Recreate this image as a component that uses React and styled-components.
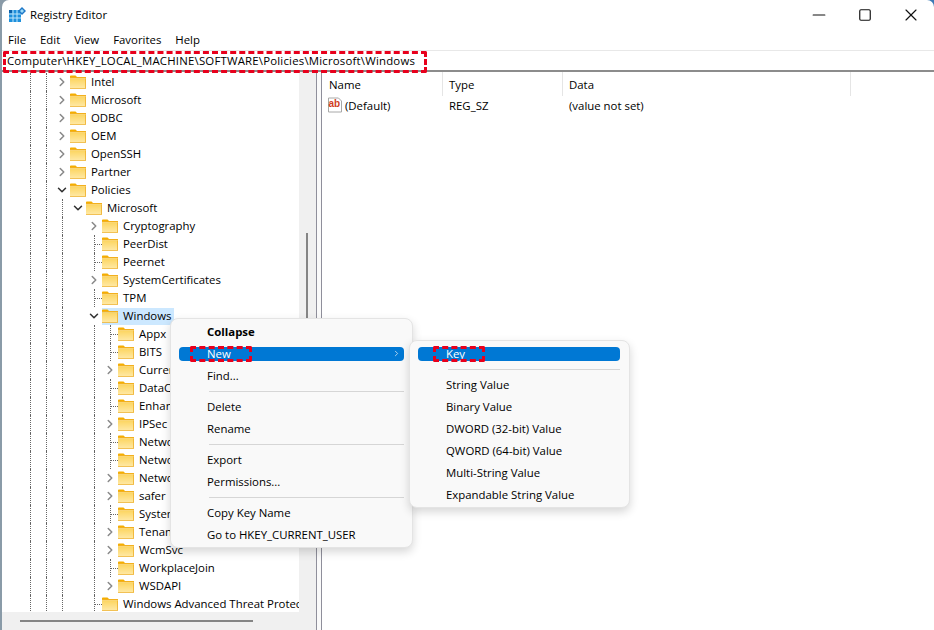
import React from 'react';
import styled, { createGlobalStyle } from 'styled-components';
import { ChevronRight, ChevronDown, Minus, Square, X } from 'lucide-react';

const GlobalStyle = createGlobalStyle`
  html, body {
    margin: 0;
    padding: 0;
    background: linear-gradient(to right, #8a9ba8, #3d7ab5);
  }
  body {
    font-family: "Open Sans", "Noto Sans", "Liberation Sans", sans-serif;
    font-size: 11.4px;
    color: #000;
  }
`;

const tree = [
  { name: 'Intel', level: 0, kind: 'closed' },
  { name: 'Microsoft', level: 0, kind: 'closed' },
  { name: 'ODBC', level: 0, kind: 'closed' },
  { name: 'OEM', level: 0, kind: 'closed' },
  { name: 'OpenSSH', level: 0, kind: 'closed' },
  { name: 'Partner', level: 0, kind: 'closed' },
  { name: 'Policies', level: 0, kind: 'open' },
  { name: 'Microsoft', level: 1, kind: 'open' },
  { name: 'Cryptography', level: 2, kind: 'closed' },
  { name: 'PeerDist', level: 2, kind: 'leaf' },
  { name: 'Peernet', level: 2, kind: 'leaf' },
  { name: 'SystemCertificates', level: 2, kind: 'closed' },
  { name: 'TPM', level: 2, kind: 'leaf' },
  { name: 'Windows', level: 2, kind: 'open', selected: true },
  { name: 'Appx', level: 3, kind: 'leaf' },
  { name: 'BITS', level: 3, kind: 'leaf' },
  { name: 'CurrentVersion', level: 3, kind: 'closed' },
  { name: 'DataCollection', level: 3, kind: 'leaf' },
  { name: 'EnhancedStorageDevices', level: 3, kind: 'leaf' },
  { name: 'IPSec', level: 3, kind: 'closed' },
  { name: 'Network Connections', level: 3, kind: 'leaf' },
  { name: 'NetworkConnectivityStatusIndicator', level: 3, kind: 'leaf' },
  { name: 'NetworkProvider', level: 3, kind: 'closed' },
  { name: 'safer', level: 3, kind: 'closed' },
  { name: 'System', level: 3, kind: 'leaf' },
  { name: 'TenantRestrictions', level: 3, kind: 'closed' },
  { name: 'WcmSvc', level: 3, kind: 'closed' },
  { name: 'WorkplaceJoin', level: 3, kind: 'leaf' },
  { name: 'WSDAPI', level: 3, kind: 'closed' },
  { name: 'Windows Advanced Threat Protection', level: 2, kind: 'leaf' },
];

// dotted guide columns left of the expander, one entry per indent step
const guideColumns = [
  [true, true],
  [true, true, true],
  [true, true, true, false],
  [true, true, true, false, true],
];

const Page = styled.div`
  width: 932px;
  height: 630px;
  margin-left: 2px;
  background: #fff;
  border-radius: 7px 7px 0 0;
  overflow: hidden;
  position: relative;
  display: flex;
  flex-direction: column;
`;

const TitleBar = styled.div`
  height: 30px;
  display: flex;
  align-items: center;
  padding-left: 7px;
`;

const TitleText = styled.span`
  flex: 1;
  margin: -1px 0 0 4px;
`;

const WindowButton = styled.div`
  width: 46px;
  height: 30px;
  display: flex;
  align-items: center;
  justify-content: center;
  color: #111;
`;

const MenuBar = styled.div`
  height: 20px;
  box-sizing: border-box;
  padding: 0 0 2px 6px;
  display: flex;
  align-items: center;
  gap: 14px;
`;

const AddressBar = styled.div`
  height: 19px;
  margin-left: -2px;
  padding-left: 7px;
  display: flex;
  align-items: center;
  letter-spacing: 0.2px;
  border-top: 1px solid #e8e8e8;
  border-bottom: 2px solid #8c8c8c;
  position: relative;
`;

const DashedMark = styled.div`
  position: absolute;
  box-sizing: border-box;
  left: ${(p) => p.$left}px;
  top: ${(p) => p.$top}px;
  width: ${(p) => p.$width}px;
  height: ${(p) => p.$height}px;
  border: 3px dashed #e8001c;
  border-radius: 2px;
  pointer-events: none;
`;

const Body = styled.div`
  flex: 1;
  display: flex;
  min-height: 0;
`;

const TreePane = styled.div`
  width: 314px;
  flex: none;
  display: grid;
  grid-template-columns: 297px 17px;
  grid-template-rows: 1fr 18px;
  background: #f0f0f0;
  min-height: 0;
`;

const TreeList = styled.div`
  background: #fff;
  overflow: hidden;
  padding: 1px 0 0 20px;
`;

const Row = styled.div`
  height: 18px;
  display: flex;
  align-items: center;
  white-space: nowrap;
`;

const Guide = styled.div`
  width: 16px;
  height: 18px;
  flex: none;
  position: relative;
  &::before {
    content: '';
    display: ${(p) => (p.$line ? 'block' : 'none')};
    position: absolute;
    left: 8px;
    top: 0;
    bottom: 0;
    border-left: 1px dotted #666;
  }
  &::after {
    content: '';
    display: ${(p) => (p.$tick ? 'block' : 'none')};
    position: absolute;
    left: 9px;
    right: 0;
    top: 9px;
    border-top: 1px dotted #666;
  }
`;

const Expander = styled.div`
  position: absolute;
  inset: 0;
  z-index: 1;
  display: flex;
  align-items: center;
  justify-content: center;
  background: #fff;
  color: ${(p) => (p.$open ? '#333' : '#8a8a8a')};
`;

const Label = styled.span`
  display: inline-flex;
  align-items: center;
  height: 17px;
  padding: 0 3px 0 2px;
  margin-left: -2px;
  gap: 5px;
  background: ${(p) => (p.$selected ? '#cce8ff' : 'transparent')};
`;

const LabelText = styled.span`
  margin-top: -2px;
`;

const VTrack = styled.div`
  grid-column: 2;
  grid-row: 1;
  position: relative;
`;

const VThumb = styled.div`
  position: absolute;
  left: 7px;
  top: 161px;
  width: 2px;
  height: 300px;
  background: #858585;
`;

const HTrack = styled.div`
  grid-column: 1 / 3;
  grid-row: 2;
  display: flex;
  align-items: center;
  padding-left: 18px;
`;

const HThumb = styled.div`
  width: 233px;
  height: 2px;
  background: #858585;
`;

const Splitter = styled.div`
  width: 4px;
  flex: none;
  background: #fafafa;
  border-left: 1px solid #8f8f9b;
  border-right: 1px solid #8f8f9b;
`;

const ListPane = styled.div`
  flex: 1;
  background: #fff;
`;

const HeaderRow = styled.div`
  height: 24px;
  display: flex;
  align-items: center;
`;

const HeaderCell = styled.div`
  width: ${(p) => p.$width}px;
  height: 24px;
  box-sizing: border-box;
  padding-left: ${(p) => p.$pad}px;
  display: flex;
  align-items: center;
  border-right: 1px solid #e5e5e5;
`;

const ValueRow = styled.div`
  height: 18px;
  display: flex;
  align-items: center;
`;

const ValueCell = styled.div`
  width: ${(p) => p.$width}px;
  box-sizing: border-box;
  padding-left: ${(p) => p.$pad}px;
  display: flex;
  align-items: center;
  gap: 2px;
`;

const Menu = styled.div`
  position: absolute;
  left: ${(p) => p.$left}px;
  top: ${(p) => p.$top}px;
  width: ${(p) => p.$width}px;
  box-sizing: border-box;
  padding: 2px ${(p) => p.$padRight}px 1px 8px;
  background: #f9f9f9;
  border: 1px solid #e4e4e4;
  border-radius: 8px;
  box-shadow: 0 4px 10px rgba(0, 0, 0, 0.16);
`;

const MenuItem = styled.div`
  height: 22px;
  box-sizing: border-box;
  position: relative;
  display: flex;
  align-items: center;
  padding: 0 0 2px 28px;
  font-weight: ${(p) => (p.$bold ? 700 : 400)};
  color: ${(p) => (p.$active ? '#fff' : '#000')};
  &::before {
    content: '';
    display: ${(p) => (p.$active ? 'block' : 'none')};
    position: absolute;
    left: 0;
    right: 0;
    top: 4px;
    height: 14px;
    border-radius: 4px;
    background: #0078d4;
  }
`;

const ItemText = styled.span`
  position: relative;
`;

const ItemArrow = styled.span`
  position: absolute;
  right: 3px;
  top: 6px;
  display: flex;
  color: #dfe8f0;
`;

const Separator = styled.div`
  height: 1px;
  margin: 4px 0 4px 30px;
  background: #d6d6d6;
`;

const RegistryIcon = () => (
  <svg width="17" height="17" viewBox="0 0 17 17">
    <rect x="0" y="3" width="12" height="12" fill="#1e90dc" />
    <path d="M4 3v12M8 3v12M0 7h12M0 11h12" stroke="#bfe6fb" strokeWidth="1" />
    <rect x="0" y="3" width="3" height="3" fill="#0b5fa8" />
    <path d="M13 0l4 4-4 4-4-4z" fill="#1e78c8" />
    <path d="M13 2l2 2-2 2-2-2z" fill="#9edcf8" />
  </svg>
);

const FolderIcon = () => (
  <svg width="16" height="16" viewBox="0 0 16 16" style={{ flex: 'none' }}>
    <defs>
      <linearGradient id="folderBody" x1="0" y1="0" x2="0" y2="1">
        <stop offset="0" stopColor="#fcd560" />
        <stop offset="1" stopColor="#ffe9a6" />
      </linearGradient>
    </defs>
    <path d="M0 2.5C0 1.8.5 1.5 1 1.5h4.5L7.5 3.5H0z" fill="#f5ae00" />
    <rect x="0" y="3" width="16" height="1.5" fill="#f2b01e" />
    <rect x="0" y="4.5" width="16" height="10" fill="url(#folderBody)" />
    <path d="M0 14h16v.8H0zM15.2 4.5h.8v10h-.8z" fill="#eeb02c" />
  </svg>
);

const ValueIcon = () => (
  <svg width="16" height="16" viewBox="0 0 16 16">
    <path d="M1.5 1h10l3 3v11h-13z" fill="#fff" stroke="#a8a8a8" />
    <text x="1.5" y="9.5" fontFamily="Liberation Sans, sans-serif" fontWeight="700" fontSize="10" fill="#d13d1e">ab</text>
  </svg>
);

const TreeRow = ({ item }) => {
  const columns = guideColumns[item.level];
  const hasExpander = item.kind !== 'leaf';
  return (
    <Row>
      {columns.map((on, i) => (
        <Guide key={i} $line={on} />
      ))}
      <Guide $line $tick={!hasExpander}>
        {hasExpander && (
          <Expander $open={item.kind === 'open'}>
            {item.kind === 'open' ? (
              <ChevronDown size={14} strokeWidth={2.6} />
            ) : (
              <ChevronRight size={14} strokeWidth={2.6} />
            )}
          </Expander>
        )}
      </Guide>
      <Label $selected={item.selected}>
        <FolderIcon />
        <LabelText>{item.name}</LabelText>
      </Label>
    </Row>
  );
};

const App = () => (
  <>
    <GlobalStyle />
    <Page>
      <TitleBar>
        <RegistryIcon />
        <TitleText>Registry Editor</TitleText>
        <WindowButton><Minus size={20} strokeWidth={1.4} /></WindowButton>
        <WindowButton><Square size={14} strokeWidth={2} /></WindowButton>
        <WindowButton><X size={20} strokeWidth={1.4} /></WindowButton>
      </TitleBar>
      <MenuBar>
        <span>File</span>
        <span>Edit</span>
        <span>View</span>
        <span>Favorites</span>
        <span>Help</span>
      </MenuBar>
      <AddressBar>
        Computer\HKEY_LOCAL_MACHINE\SOFTWARE\Policies\Microsoft\Windows
        <DashedMark $left={3} $top={0} $width={424} $height={22} />
      </AddressBar>
      <Body>
        <TreePane>
          <TreeList>
            {tree.map((item, i) => (
              <TreeRow key={i} item={item} />
            ))}
          </TreeList>
          <VTrack><VThumb /></VTrack>
          <HTrack><HThumb /></HTrack>
        </TreePane>
        <Splitter />
        <ListPane>
          <HeaderRow>
            <HeaderCell $width={121} $pad={7}>Name</HeaderCell>
            <HeaderCell $width={120} $pad={6}>Type</HeaderCell>
            <HeaderCell $width={288} $pad={6}>Data</HeaderCell>
          </HeaderRow>
          <ValueRow>
            <ValueCell $width={121} $pad={5}><ValueIcon />(Default)</ValueCell>
            <ValueCell $width={120} $pad={6}>REG_SZ</ValueCell>
            <ValueCell $width={288} $pad={6}>(value not set)</ValueCell>
          </ValueRow>
        </ListPane>
      </Body>

      <Menu $left={168} $top={318} $width={243} $padRight={8}>
        <MenuItem $bold>Collapse</MenuItem>
        <MenuItem $active>
          <ItemText>New</ItemText>
          <ItemArrow><ChevronRight size={9} strokeWidth={2} /></ItemArrow>
          <DashedMark $left={11} $top={3} $width={62} $height={16} />
        </MenuItem>
        <MenuItem>Find...</MenuItem>
        <Separator />
        <MenuItem>Delete</MenuItem>
        <MenuItem>Rename</MenuItem>
        <Separator />
        <MenuItem>Export</MenuItem>
        <MenuItem>Permissions...</MenuItem>
        <Separator />
        <MenuItem>Copy Key Name</MenuItem>
        <MenuItem>Go to HKEY_CURRENT_USER</MenuItem>
      </Menu>

      <Menu $left={407} $top={340} $width={221} $padRight={9}>
        <MenuItem $active>
          <ItemText>Key</ItemText>
          <DashedMark $left={15} $top={3} $width={52} $height={16} />
        </MenuItem>
        <Separator />
        <MenuItem>String Value</MenuItem>
        <MenuItem>Binary Value</MenuItem>
        <MenuItem>DWORD (32-bit) Value</MenuItem>
        <MenuItem>QWORD (64-bit) Value</MenuItem>
        <MenuItem>Multi-String Value</MenuItem>
        <MenuItem>Expandable String Value</MenuItem>
      </Menu>
    </Page>
  </>
);

export default App;
